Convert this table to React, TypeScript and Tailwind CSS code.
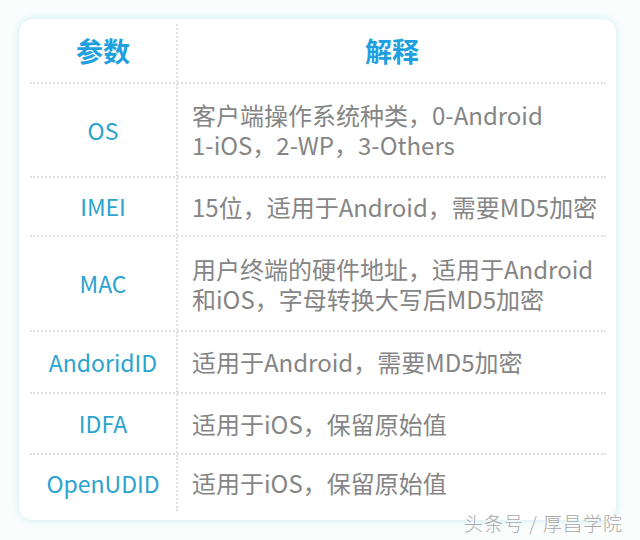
import React from "react";

const rows: { k: string; v: string[]; h: string }[] = [
  { k: "OS", v: ["客户端操作系统种类，0-Android", "1-iOS，2-WP，3-Others"], h: "h-[94px]" },
  { k: "IMEI", v: ["15位，适用于Android，需要MD5加密"], h: "h-[59px]" },
  { k: "MAC", v: ["用户终端的硬件地址，适用于Android", "和iOS，字母转换大写后MD5加密"], h: "h-[95px]" },
  { k: "AndoridID", v: ["适用于Android，需要MD5加密"], h: "h-[62px]" },
  { k: "IDFA", v: ["适用于iOS，保留原始值"], h: "h-[61px]" },
  { k: "OpenUDID", v: ["适用于iOS，保留原始值"], h: "h-[58px]" },
];

export default function App() {
  return (
    <div
      className="relative w-[640px] h-[540px] bg-[#fbfdfd] pl-[19px] pt-[19px]"
      style={{ fontFamily: '"Noto Sans CJK SC", "Noto Sans", sans-serif' }}
    >
      <div className="w-[597px] h-[501px] rounded-[14px] bg-white shadow-[0_0_10px_rgba(140,215,225,0.45)] pl-[11px] pr-[10px]">
        <div className="flex h-[63px] pt-[5px]">
          <div className="w-[148px] border-r-2 border-dotted border-[#e0e0e0] flex items-center justify-center pb-[3px] text-[27px] font-bold text-[#1e9fdf]">
            参数
          </div>
          <div className="flex-1 flex items-center justify-center pb-[3px] text-[27px] font-bold text-[#1e9fdf]">
            解释
          </div>
        </div>
        {rows.map((r) => (
          <div key={r.k} className={`flex ${r.h} border-t-2 border-dotted border-[#e0e0e0]`}>
            <div className="w-[148px] border-r-2 border-dotted border-[#e0e0e0] flex items-center justify-center text-[23px] text-[#2aa3cf]">
              {r.k}
            </div>
            <div className="flex-1 flex flex-col justify-center pl-[14px] text-[24px] leading-[30px] text-[#858585]">
              {r.v.map((line) => (
                <div key={line} className="h-[30px] whitespace-nowrap">{line}</div>
              ))}
            </div>
          </div>
        ))}
      </div>
      <div className="absolute left-[464px] top-[509px] text-[19px] text-[#a8a8a8] font-light tracking-[1px] [text-shadow:0_0_2px_#fff,0_0_2px_#fff]">
        头条号 / 厚昌学院
      </div>
    </div>
  );
}
